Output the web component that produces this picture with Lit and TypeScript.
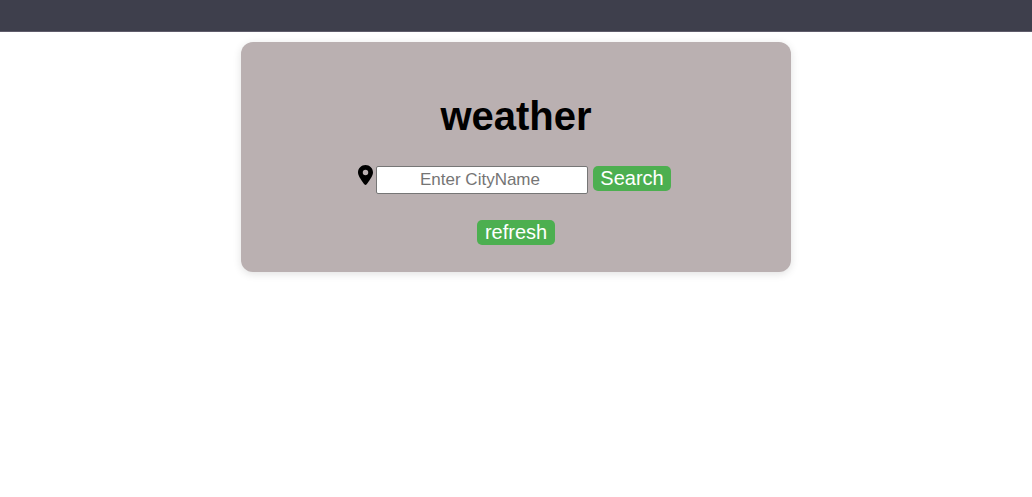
import { LitElement, html, css } from "lit";
import { customElement } from "lit/decorators.js";

@customElement("app-root")
export class AppRoot extends LitElement {
  static styles = css`
    :host {
      display: block;
      font-family: "Liberation Sans", Arial, sans-serif;
      color: #000;
    }
    .bar {
      box-sizing: border-box;
      height: 32px;
      background: #3e3f4c;
      border-bottom: 1px solid #5f5c6b;
    }
    .card {
      box-sizing: border-box;
      max-width: 550px;
      margin: 10px auto;
      padding: 51px 20px 27px;
      display: flex;
      flex-direction: column;
      align-items: center;
      gap: 26px;
      border-radius: 12px;
      background: #bab0b1;
      box-shadow: 0 2px 8px rgba(0, 0, 0, 0.12);
    }
    .title {
      margin: 0;
      font-size: 40px;
      line-height: 46px;
      font-weight: bold;
    }
    .search {
      display: flex;
      align-items: baseline;
      padding-right: 3px;
    }
    .locate {
      display: flex;
      margin-right: 3px;
    }
    .pin {
      width: 15px;
      height: 20px;
    }
    .city {
      box-sizing: border-box;
      width: 212px;
      height: 28px;
      margin: 0 5px 0 0;
      padding: 1px 6px 1px 2px;
      border: 1px solid #767676;
      border-radius: 2px;
      background: #fff;
      font-family: inherit;
      font-size: 17px;
      text-align: center;
    }
    .city::placeholder {
      color: #757575;
    }
    .button {
      box-sizing: border-box;
      min-width: 78px;
      height: 25px;
      margin: 0;
      padding: 0 7px;
      border: 0;
      border-radius: 5px;
      background: #4caf50;
      color: #fff;
      font-family: inherit;
      font-size: 20px;
      line-height: 25px;
      cursor: pointer;
    }
  `;

  render() {
    return html`
      <header class="bar"></header>
      <main class="card">
        <h1 class="title">weather</h1>
        <form class="search" @submit=${(e: Event) => e.preventDefault()}>
          <label class="locate" for="city">
            <svg class="pin" viewBox="0 0 384 512" role="img" aria-label="City">
              <path
                d="M215.7 499.2C267 435 384 279.4 384 192C384 86 298 0 192 0S0 86 0 192c0 87.4 117 243 168.3 307.2c12.3 15.3 35.1 15.3 47.4 0zM192 122a70 70 0 1 1 0 140 70 70 0 1 1 0-140z"
              />
            </svg>
          </label>
          <input class="city" id="city" type="text" placeholder="Enter CityName" />
          <button class="button" type="submit">Search</button>
        </form>
        <button class="button" type="button">refresh</button>
      </main>
    `;
  }
}
